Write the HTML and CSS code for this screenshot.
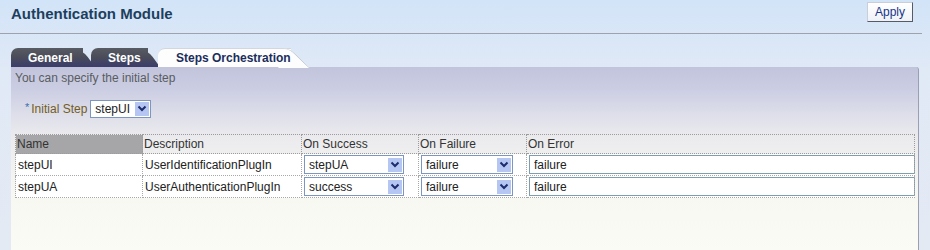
FILE: index.html
```html
<!DOCTYPE html>
<html lang="en">
<head>
    <meta charset="UTF-8">
    <meta name="viewport" content="width=device-width, initial-scale=1.0">
    <title>Authentication Module</title>
    <link rel="stylesheet" href="styles.css">
</head>
<body>
    <header class="page-header">
        <h1 class="page-title">Authentication Module</h1>
        <button class="btn-apply">Apply</button>
    </header>

    <div class="tabs">
        <div class="tab tab-dark tab-general">General</div>
        <div class="tab tab-dark tab-steps">Steps</div>
        <div class="tab tab-active">Steps Orchestration</div>
    </div>

    <div class="panel">
        <p class="panel-hint">You can specify the initial step</p>

        <div class="field-row">
            <span class="required">*</span>
            <label class="field-label">Initial Step</label>
            <div class="choice choice-initial">
                <span class="choice-value">stepUI</span>
                <span class="choice-arrow"><svg width="14" height="15" viewBox="0 0 14 15"><polyline points="3.5,5.5 7,9 10.5,5.5" fill="none" stroke="#1c2c6c" stroke-width="2"/></svg></span>
            </div>
        </div>

        <table class="steps-table">
            <colgroup>
                <col class="col-name">
                <col class="col-desc">
                <col class="col-success">
                <col class="col-failure">
                <col class="col-error">
            </colgroup>
            <thead>
                <tr>
                    <th class="th-sorted">Name</th>
                    <th>Description</th>
                    <th>On Success</th>
                    <th>On Failure</th>
                    <th>On Error</th>
                </tr>
            </thead>
            <tbody>
                <tr>
                    <td>stepUI</td>
                    <td>UserIdentificationPlugIn</td>
                    <td>
                        <div class="choice choice-success">
                            <span class="choice-value">stepUA</span>
                            <span class="choice-arrow"><svg width="14" height="15" viewBox="0 0 14 15"><polyline points="3.5,5.5 7,9 10.5,5.5" fill="none" stroke="#1c2c6c" stroke-width="2"/></svg></span>
                        </div>
                    </td>
                    <td>
                        <div class="choice choice-failure">
                            <span class="choice-value">failure</span>
                            <span class="choice-arrow"><svg width="14" height="15" viewBox="0 0 14 15"><polyline points="3.5,5.5 7,9 10.5,5.5" fill="none" stroke="#1c2c6c" stroke-width="2"/></svg></span>
                        </div>
                    </td>
                    <td><input class="text-input" type="text" value="failure"></td>
                </tr>
                <tr>
                    <td>stepUA</td>
                    <td>UserAuthenticationPlugIn</td>
                    <td>
                        <div class="choice choice-success">
                            <span class="choice-value">success</span>
                            <span class="choice-arrow"><svg width="14" height="15" viewBox="0 0 14 15"><polyline points="3.5,5.5 7,9 10.5,5.5" fill="none" stroke="#1c2c6c" stroke-width="2"/></svg></span>
                        </div>
                    </td>
                    <td>
                        <div class="choice choice-failure">
                            <span class="choice-value">failure</span>
                            <span class="choice-arrow"><svg width="14" height="15" viewBox="0 0 14 15"><polyline points="3.5,5.5 7,9 10.5,5.5" fill="none" stroke="#1c2c6c" stroke-width="2"/></svg></span>
                        </div>
                    </td>
                    <td><input class="text-input" type="text" value="failure"></td>
                </tr>
            </tbody>
        </table>
    </div>
</body>
</html>
```

FILE: styles.css
```css
*{
    margin: 0px;
    padding: 0px;
    box-sizing: border-box;
}

body{
    font-family: "Liberation Sans", Arial, sans-serif;
    font-size: 12px;
    color: #333;
    background: linear-gradient(#d2e4f8, #e0e9f6 70px, #e4eaf4);
    height: 250px;
    overflow: hidden;
}

.page-header{
    height: 34px;
    margin-right: 8px;
    padding: 0 9px 0 11px;
    display: flex;
    justify-content: space-between;
    align-items: flex-start;
    border-bottom: 1px solid #9ea2aa;
}

.page-title{
    margin-top: 5px;
    font-size: 15px;
    line-height: 18px;
    font-weight: bold;
    color: #1d3f5e;
}

.btn-apply{
    margin-top: 2px;
    width: 46px;
    height: 20px;
    font-family: inherit;
    font-size: 12px;
    color: #17338a;
    background: linear-gradient(#ffffff, #eef2f7);
    border: 1px solid;
    border-color: #c9ced8 #575b68 #575b68 #c9ced8;
}

.tabs{
    margin-top: 14px;
    padding-left: 11px;
    height: 19px;
    display: flex;
    align-items: flex-end;
}

/* each tab is its own stacking context so the slope sits under its label */
.tab{
    position: relative;
    z-index: 0;
    height: 19px;
    line-height: 20px;
    font-weight: bold;
    font-size: 12px;
    border-radius: 7px 0 0 0;
    white-space: nowrap;
}

.tab::after{
    content: "";
    position: absolute;
    z-index: -1;
    top: 0;
    left: calc(100% - 10px);
    width: 22px;
    height: 100%;
    background: inherit;
    transform: skewX(36deg);
    transform-origin: left bottom;
    border-top-right-radius: 9px;
}

.tab-dark{
    color: #fff;
    background: linear-gradient(#585b63, #4b4d59 45%, #3b3d6b);
}

.tab-general{
    width: 72px;
    padding-left: 17px;
}

.tab-steps{
    width: 57px;
    margin-left: 8px;
    padding-left: 17px;
}

.tab-active{
    width: 133px;
    margin-left: 10px;
    padding-left: 18px;
    color: #1b2d5c;
    background: #fdfdfd;
    border-top: 1px solid #d4d6de;
    line-height: 18px;
}

.tab-active::after{
    top: -1px;
    left: calc(100% - 12px);
    width: 30px;
    height: 19px;
    transform: skewX(46deg);
    border-top: 1px solid #d4d6de;
    border-right: 1px solid #b4b8c6;
    border-top-right-radius: 6px;
}

.panel{
    margin: 0 11px;
    padding: 4px 4px 0 4px;
    height: 183px;
    border-right: 1px solid #9aa0b2;
    border-top-right-radius: 3px;
    background: linear-gradient(#c2c4dc, #cbcde3 22px, #dcdde9 45px, #ebebee 70px, #f8f8f3 130px, #fbfbf6);
}

.panel-hint{
    line-height: 14px;
    color: #595d60;
}

.field-row{
    margin-top: 15px;
    padding-left: 10px;
    display: flex;
    align-items: center;
    height: 18px;
}

.required{
    color: #3a6eb0;
    font-size: 11px;
    margin-right: 2px;
    align-self: flex-start;
    line-height: 14px;
}

.field-label{
    color: #735c22;
    margin-right: 3px;
}

.choice{
    display: flex;
    align-items: center;
    justify-content: space-between;
    height: 18px;
    padding: 0 1px 0 4px;
    background: #fff;
    border: 1px solid #7d96bd;
    color: #222;
}

.choice-arrow{
    display: flex;
    width: 14px;
    height: 14px;
    background: #b6c6f2;
}

.choice-arrow svg{
    margin-top: -1px;
}

.choice-initial{
    width: 61px;
}

.steps-table{
    margin-top: 16px;
    width: 899px;
    border-collapse: collapse;
    table-layout: fixed;
}

.col-name{ width: 127px; }
.col-desc{ width: 159px; }
.col-success{ width: 117px; }
.col-failure{ width: 108px; }
.col-error{ width: 388px; }

.steps-table th{
    height: 19px;
    padding: 0 1px;
    font-weight: normal;
    text-align: left;
    color: #333;
    border: 1px dotted #9c9c9c;
}

.th-sorted{
    background: #a6a6a8;
}

.steps-table td{
    height: 22px;
    padding: 0 2px;
    background: #fff;
    border: 1px dotted #a8a8a8;
    color: #222;
}

.choice-success{
    width: 100px;
    height: 19px;
}

.choice-failure{
    width: 92px;
    height: 19px;
}

.text-input{
    display: block;
    width: 386px;
    height: 19px;
    padding-left: 4px;
    font-family: inherit;
    font-size: 12px;
    color: #222;
    border: 1px solid #7f9db0;
    background: #fff;
    outline: none;
}
```
